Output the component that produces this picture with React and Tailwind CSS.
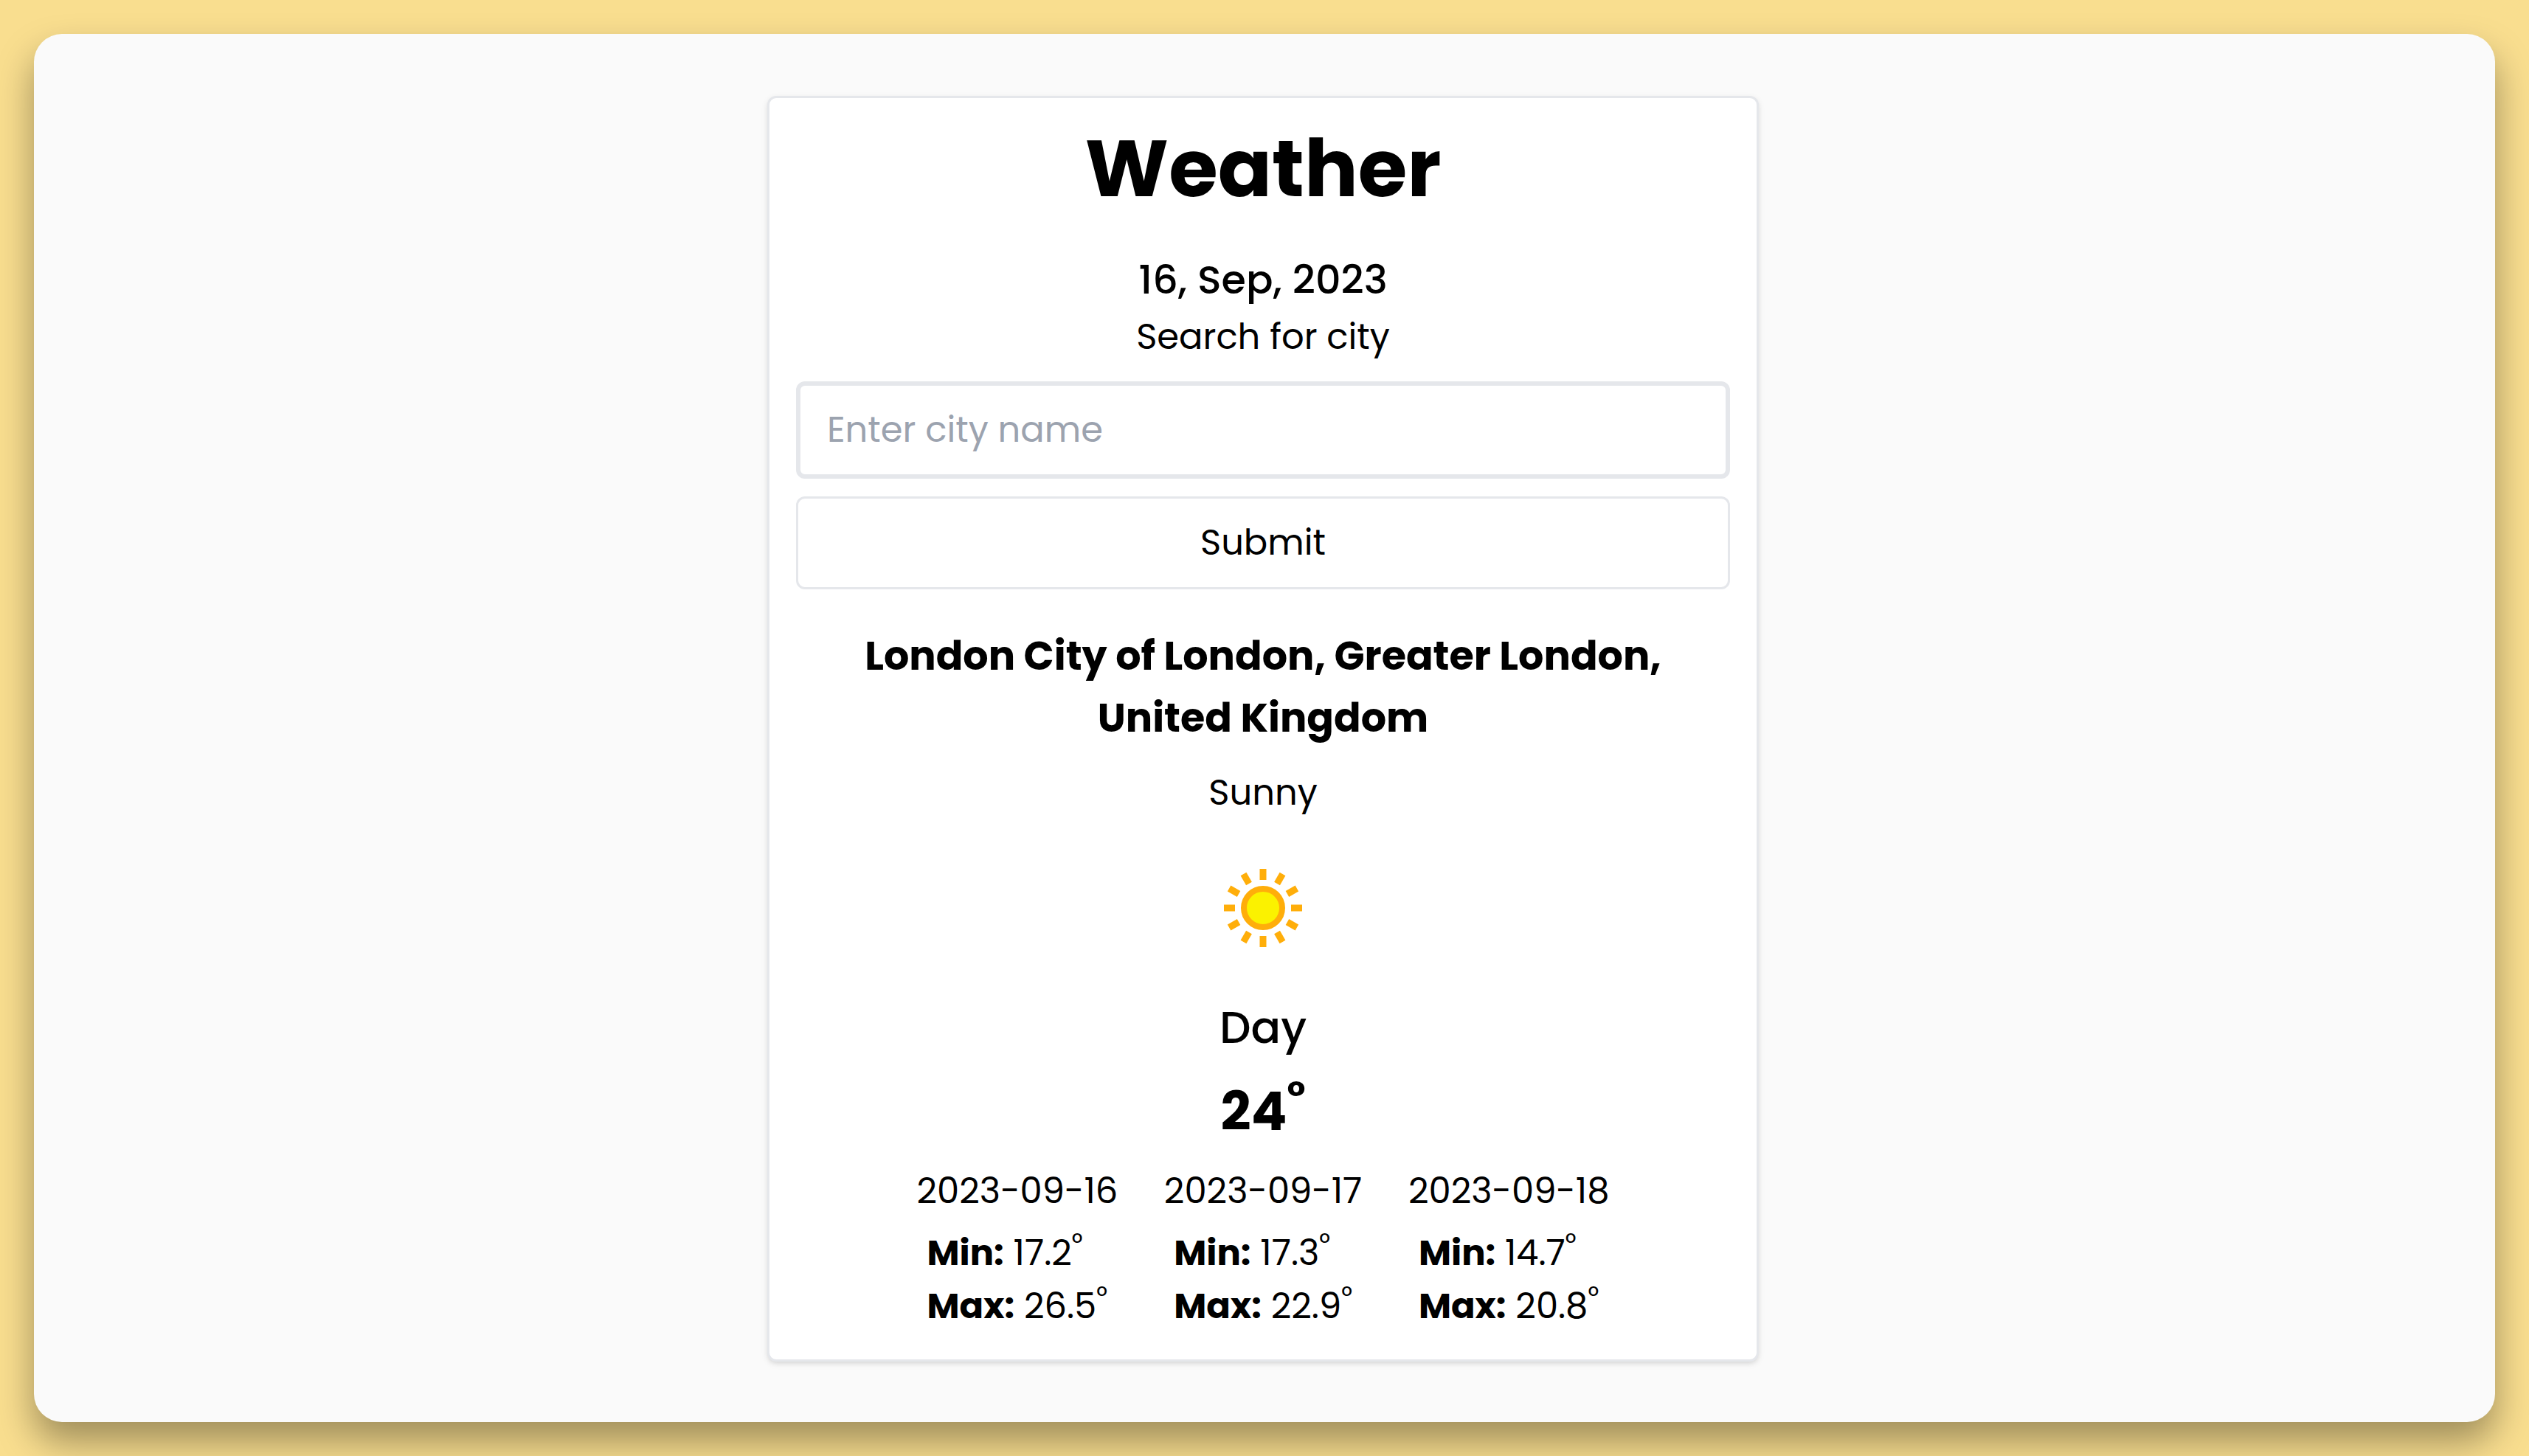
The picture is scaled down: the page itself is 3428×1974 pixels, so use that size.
const forecast = [
  { date: '2023-09-16', min: '17.2', max: '26.5' },
  { date: '2023-09-17', min: '17.3', max: '22.9' },
  { date: '2023-09-18', min: '14.7', max: '20.8' },
];

const rays = [0, 30, 60, 90, 120, 150, 180, 210, 240, 270, 300, 330];

function SunIcon() {
  return (
    <svg viewBox="0 0 192 192" className="size-48" role="img" aria-label="Sunny">
      <g fill="#ffae0a">
        {rays.map((angle) => (
          <rect key={angle} x="91.5" y="43" width="9" height="15" transform={`rotate(${angle} 96 96)`} />
        ))}
      </g>
      <circle cx="96" cy="96" r="26" fill="#fbf200" stroke="#ffae0a" strokeWidth="8" />
    </svg>
  );
}

function Temperature({ label, value }) {
  return (
    <p>
      <strong className="font-bold">{label}:</strong> {value}
      <sup>°</sup>
    </p>
  );
}

export default function App() {
  return (
    <div className="flex min-h-screen bg-[#f9de8f] p-[46px] font-[Poppins,sans-serif] text-[48px] leading-[72px] text-black">
      <main className="flex flex-1 items-center justify-center rounded-[38px] bg-[#fafafa] pt-0.5 pr-1 shadow-[0_27px_50px_rgba(0,0,0,0.36)]">
        <section className="flex w-full max-w-[1344px] flex-col items-center rounded-xl border-3 border-[#e5e7eb] bg-white p-9 text-center shadow-[0_3px_9px_rgba(0,0,0,0.1),0_3px_6px_-3px_rgba(0,0,0,0.1)]">
          <h1 className="mb-12 text-[108px] leading-[120px] font-bold">Weather</h1>
          <p className="text-[54px] leading-[84px] font-medium">16, Sep, 2023</p>
          <form className="flex w-full flex-col gap-6" onSubmit={(e) => e.preventDefault()}>
            <label htmlFor="city">Search for city</label>
            <input
              id="city"
              type="text"
              placeholder="Enter city name"
              className="w-full rounded-xl border-6 border-[#e5e7eb] px-9 py-6 placeholder:text-[#9ca3af]"
            />
            <button type="submit" className="w-full rounded-xl border-3 border-[#e5e7eb] py-6">
              Submit
            </button>
          </form>
          <h2 className="mt-12 px-9 text-[54px] leading-[84px] font-bold">
            London City of London, Greater London, United Kingdom
          </h2>
          <p className="my-6">Sunny</p>
          <SunIcon />
          <p className="mt-6 text-[60px] leading-[84px] font-medium">Day</p>
          <p className="my-6 text-[72px] leading-[96px] font-bold">
            24<sup>°</sup>
          </p>
          <div className="flex justify-center gap-[62px]">
            {forecast.map((day) => (
              <div key={day.date}>
                <p>{day.date}</p>
                <div className="px-3.5 pt-3 text-left">
                  <Temperature label="Min" value={day.min} />
                  <Temperature label="Max" value={day.max} />
                </div>
              </div>
            ))}
          </div>
        </section>
      </main>
    </div>
  );
}
